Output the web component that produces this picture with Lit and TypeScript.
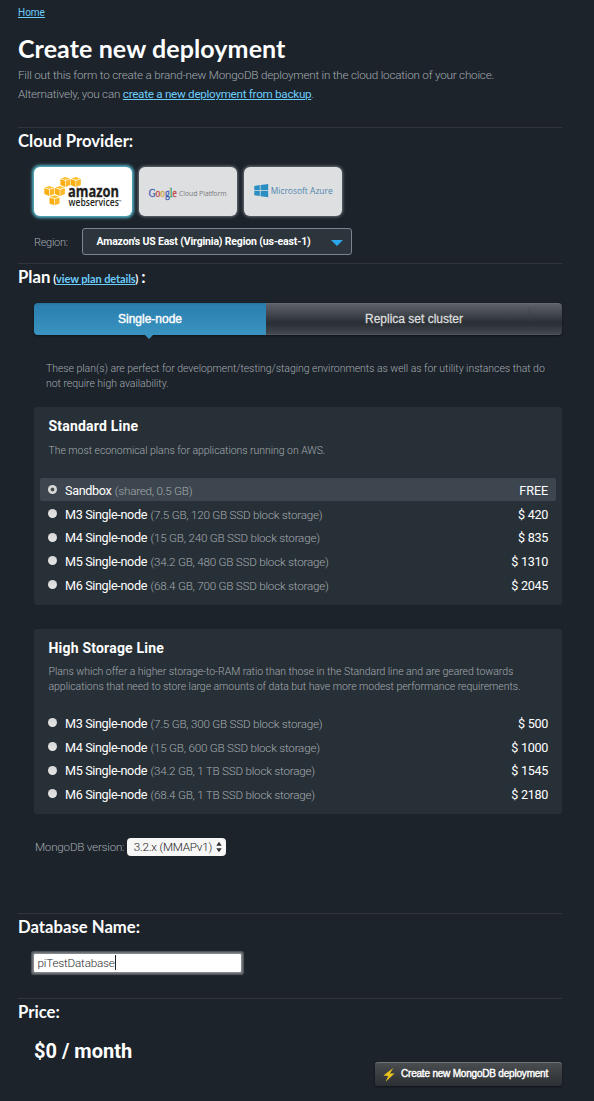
import { LitElement, html, svg, css } from "lit";
import { customElement, property, state } from "lit/decorators.js";
import { classMap } from "lit/directives/class-map.js";

interface Plan {
  id: string;
  name: string;
  specs: string;
  price: string;
}

const STANDARD: Plan[] = [
  { id: "sandbox", name: "Sandbox", specs: "(shared, 0.5 GB)", price: "FREE" },
  { id: "s-m3", name: "M3 Single-node", specs: "(7.5 GB, 120 GB SSD block storage)", price: "$ 420" },
  { id: "s-m4", name: "M4 Single-node", specs: "(15 GB, 240 GB SSD block storage)", price: "$ 835" },
  { id: "s-m5", name: "M5 Single-node", specs: "(34.2 GB, 480 GB SSD block storage)", price: "$ 1310" },
  { id: "s-m6", name: "M6 Single-node", specs: "(68.4 GB, 700 GB SSD block storage)", price: "$ 2045" },
];

const HIGH_STORAGE: Plan[] = [
  { id: "h-m3", name: "M3 Single-node", specs: "(7.5 GB, 300 GB SSD block storage)", price: "$ 500" },
  { id: "h-m4", name: "M4 Single-node", specs: "(15 GB, 600 GB SSD block storage)", price: "$ 1000" },
  { id: "h-m5", name: "M5 Single-node", specs: "(34.2 GB, 1 TB SSD block storage)", price: "$ 1545" },
  { id: "h-m6", name: "M6 Single-node", specs: "(68.4 GB, 1 TB SSD block storage)", price: "$ 2180" },
];

@customElement("plan-line")
export class PlanLine extends LitElement {
  @property() heading = "";
  @property({ attribute: false }) lines: string[] = [];
  @property({ attribute: false }) plans: Plan[] = [];
  @property() selected = "";

  static styles = css`
    :host {
      display: block;
      box-sizing: border-box;
      padding: 10px 6px 8.5px;
      border-radius: 3px;
      background: #283037;
      font-family: Roboto, sans-serif;
    }
    .heading {
      margin: 0;
      padding-left: 8.5px;
      font-size: 14px;
      line-height: 19px;
      font-weight: 700;
      letter-spacing: 0.2px;
      color: #fff;
    }
    .desc {
      padding: 7px 0 20px 8.5px;
      font-size: 10.5px;
      line-height: 15px;
      font-weight: 300;
      letter-spacing: -0.05px;
      color: #a3aaaf;
      white-space: nowrap;
    }
    .desc.double {
      padding: 6px 0 17px 8.5px;
    }
    .row {
      display: flex;
      align-items: baseline;
      height: 23.7px;
      box-sizing: border-box;
      padding: 0 8px;
      border-radius: 2px;
      color: #fff;
      font-size: 12.6px;
      line-height: 25px;
      white-space: pre;
    }
    .row.on {
      height: 23px;
      margin-bottom: 0.7px;
      background: #3d464e;
    }
    .radio {
      display: block;
      align-self: center;
      width: 9px;
      height: 9px;
      margin-right: 8px;
      border-radius: 50%;
      background: linear-gradient(#d6d6d6, #e6e6e6);
    }
    .on .radio {
      background: radial-gradient(circle, #4a4d50 0 1.5px, #d8d8d8 2.3px);
    }
    .name {
      letter-spacing: -0.35px;
    }
    .specs {
      margin-left: 3.5px;
      font-size: 11.7px;
      font-weight: 300;
      letter-spacing: -0.24px;
      color: #a3aaaf;
    }
    .price {
      margin-left: auto;
      letter-spacing: -0.3px;
    }
    .price.free {
      letter-spacing: -0.1px;
    }
  `;

  render() {
    return html`
      <h3 class="heading">${this.heading}</h3>
      <div class=${classMap({ desc: true, double: this.lines.length > 1 })}>
        ${this.lines.map((l) => html`<div>${l}</div>`)}
      </div>
      ${this.plans.map(
        (p) => html`<div class=${classMap({ row: true, on: p.id === this.selected })}>
          <span class="radio"></span><span class="name">${p.name}</span><span class="specs">${p.specs}</span
          ><span class=${classMap({ price: true, free: p.price === "FREE" })}>${p.price}</span>
        </div>`
      )}
    `;
  }
}

const cube = (x: number, y: number) => svg`
  <g transform="translate(${x} ${y})">
    <path d="M5.1 0L9.7 1.5 5.1 3.1 0.5 1.5Z" fill="#fcc22f"/>
    <path d="M0.1 2.1L4.8 3.8V10L0.1 8.1Z" fill="#f9ae12"/>
    <path d="M10.1 2.1L5.4 3.8V10L10.1 8.1Z" fill="#fdb92a"/>
  </g>`;

@customElement("app-root")
export class AppRoot extends LitElement {
  @state() plan = "sandbox";

  static styles = css`
    :host {
      display: block;
      box-sizing: border-box;
      min-height: 1101px;
      padding: 6px 32px 0 18px;
      background: #1c232b;
      font-family: Roboto, sans-serif;
      color: #a3aaaf;
      white-space: nowrap;
    }
    a {
      color: #6ccdfb;
      text-decoration: underline;
      cursor: pointer;
    }
    .crumb {
      height: 26px;
      font-size: 10px;
      line-height: 14px;
    }
    .title {
      margin: 0;
      height: 34px;
      font: 700 25px/32px Lato, sans-serif;
      letter-spacing: 0.1px;
      color: #fff;
    }
    .intro {
      height: 61px;
      font-size: 11.7px;
      line-height: 19px;
      font-weight: 300;
      letter-spacing: -0.22px;
    }
    .intro a {
      font-weight: 400;
      letter-spacing: -0.29px;
    }
    .section {
      box-sizing: border-box;
      border-top: 1px solid #30363b;
    }
    .provider {
      height: 136px;
    }
    .plan {
      height: 650px;
    }
    .database {
      height: 85px;
    }
    .label {
      margin: 0;
      height: 26px;
      font: 700 16.7px/27.5px Lato, sans-serif;
      color: #fff;
    }
    .label .details {
      margin: 0 3px 0 3px;
      font-size: 11px;
      letter-spacing: -0.1px;
    }
    .body {
      padding-left: 16px;
    }
    .logos {
      display: flex;
      gap: 7px;
      padding-top: 13px;
    }
    .logo {
      width: 98px;
      height: 49px;
      border-radius: 6px;
      background: #dedfe1;
      box-shadow: 0 0 3px 1px #6c7177;
    }
    .logo.on {
      background: #fff;
      box-shadow: 0 0 3px 2px #56b4c8;
    }
    .logo svg {
      display: block;
    }
    .region {
      display: flex;
      align-items: center;
      padding-top: 12px;
      font-size: 12px;
      font-weight: 300;
    }
    .region-name {
      width: 48px;
      padding-top: 1px;
      font-size: 11px;
      letter-spacing: -0.3px;
    }
    .select {
      display: flex;
      align-items: center;
      justify-content: space-between;
      box-sizing: border-box;
      width: 270px;
      height: 27px;
      padding: 0 8px 0 13.5px;
      border: 1px solid #7b848c;
      border-radius: 3px;
      background: #2c353c;
      color: #fff;
      font-size: 10.5px;
      font-weight: 700;
      letter-spacing: -0.17px;
    }
    .arrow {
      margin-top: 3px;
      border: 6px solid transparent;
      border-top-color: #2ba6ec;
      border-bottom: 0;
    }
    .tabs {
      display: flex;
      height: 32px;
      margin-top: 13px;
      border-radius: 4px;
      box-shadow: 0 1px 2px #10151a;
      font: 12px/32px "Liberation Sans", sans-serif;
      text-align: center;
    }
    .tab {
      flex: 1;
      border-radius: 0 4px 4px 0;
      background:
        linear-gradient(#474b52, #34383e) 263px 4px / 1px 15px no-repeat,
        linear-gradient(#6a6d76 0, #5a5d66 6%, #41464d 36%, #2b3036 60%, #2c3238 68%, #40464c 95%, #555b62 100%);
      color: #dcdcdc;
      -webkit-text-stroke: 0.3px #dcdcdc;
    }
    .tab.on {
      flex: 0 0 232px;
      position: relative;
      border-radius: 4px 0 0 4px;
      background: linear-gradient(#2b719b 0, #2a80b0 8%, #3a93c1 100%);
      color: #fff;
      -webkit-text-stroke: 0.4px #fff;
    }
    .tab.on::after {
      content: "";
      position: absolute;
      top: 32px;
      left: 111px;
      border: 4px solid transparent;
      border-top-color: #3a93c1;
      border-bottom: 0;
    }
    .note {
      padding: 26px 0 16px 12px;
      font-size: 10.5px;
      line-height: 15px;
      font-weight: 300;
      letter-spacing: -0.045px;
    }
    .lines {
      display: grid;
      gap: 24px;
    }
    .version {
      display: flex;
      align-items: center;
      gap: 2.5px;
      padding: 24px 0 0 1px;
      font-size: 11.7px;
      font-weight: 300;
      letter-spacing: -0.25px;
    }
    .native {
      display: flex;
      align-items: center;
      justify-content: space-between;
      box-sizing: border-box;
      width: 99px;
      height: 18px;
      padding: 0 4px 0 7px;
      border-radius: 4px;
      background: #f7f7f7;
      color: #222;
      line-height: 18px;
    }
    .field {
      display: flex;
      align-items: center;
      box-sizing: border-box;
      width: 207px;
      height: 18px;
      margin: 13.5px 0 0;
      padding-left: 3.5px;
      background: #fff;
      box-shadow: 0 0 0 1px #83868a, 0 0 0 2px #6b7075, 0 0 1px 3px #555b60;
      border-radius: 1px;
      color: #2c2c2c;
      font-size: 11.7px;
      line-height: 18px;
      font-weight: 300;
      letter-spacing: -0.2px;
    }
    .caret {
      width: 1px;
      height: 15px;
      background: #222;
    }
    .amount {
      height: 37px;
      box-sizing: border-box;
      padding-top: 15px;
      font-size: 20px;
      line-height: 22px;
      font-weight: 700;
      color: #fff;
    }
    .actions {
      display: flex;
      justify-content: flex-end;
    }
    .button {
      display: flex;
      align-items: center;
      box-sizing: border-box;
      width: 187px;
      height: 24px;
      padding: 0 0 2px 8px;
      border-top: 1px solid #6f7679;
      border-radius: 3px;
      background: linear-gradient(#4b4e50, #3a3d3f 50%, #2b3034);
      box-shadow: 0 1px 2px #10151a;
      color: #fff;
      font: 10px/20px "Liberation Sans", sans-serif;
      letter-spacing: -0.2px;
      -webkit-text-stroke: 0.4px #fff;
    }
    .button svg {
      margin: 3px 6px 0 0;
    }
  `;

  private aws() {
    return html`<svg width="98" height="49" viewBox="0 0 98 49">
      ${cube(26.3, 10)} ${cube(36.7, 10)} ${cube(10.2, 19)} ${cube(20.8, 19)} ${cube(15.4, 28.3)}
      <text x="34" y="29.8" font-family="Open Sans" font-weight="700" font-size="15.5" fill="#231f20"
        stroke="#231f20" stroke-width="0.3" textLength="51" lengthAdjust="spacingAndGlyphs">amazon</text>
      <text x="34.5" y="39" font-family="Open Sans" font-weight="600" font-size="10" fill="#231f20"
        textLength="53" lengthAdjust="spacingAndGlyphs">webservices<tspan font-size="4" dy="-3.5">™</tspan></text>
    </svg>`;
  }

  private google() {
    return html`<svg width="98" height="49" viewBox="0 0 98 49">
      <text x="9.7" y="30" font-family="Liberation Serif" font-size="11.5" textLength="28"
        lengthAdjust="spacingAndGlyphs" stroke-width="0.3"><tspan fill="#3c60b4" stroke="#3c60b4">G</tspan><tspan fill="#c24a45" stroke="#c24a45">o</tspan><tspan fill="#d1a53a" stroke="#d1a53a">o</tspan><tspan fill="#3c60b4" stroke="#3c60b4">g</tspan><tspan fill="#3f9a5a" stroke="#3f9a5a">l</tspan><tspan fill="#c24a45" stroke="#c24a45">e</tspan></text>
      <text x="40" y="29" font-family="Open Sans" font-size="7" fill="#77797c" textLength="47.5"
        lengthAdjust="spacingAndGlyphs">Cloud Platform</text>
    </svg>`;
  }

  private azure() {
    return html`<svg width="98" height="49" viewBox="0 0 98 49">
      <path fill="#2b8ec2" d="M10.3 18.9L15.8 18.1V23.2H10.3ZM16.6 18L24.2 17V23.2H16.6ZM10.3 24H15.8V29L10.3 28.3ZM16.6 24H24.2V30.2L16.6 29.2Z" />
      <text x="26.7" y="27" font-family="Open Sans" font-size="9" fill="#4f86ae" textLength="62"
        lengthAdjust="spacingAndGlyphs">Microsoft Azure</text>
    </svg>`;
  }

  render() {
    return html`
      <div class="crumb"><a>Home</a></div>
      <h1 class="title">Create new deployment</h1>
      <div class="intro">
        <div>Fill out this form to create a brand-new MongoDB deployment in the cloud location of your choice.</div>
        <div>Alternatively, you can <a>create a new deployment from backup</a>.</div>
      </div>

      <section class="section provider">
        <h2 class="label">Cloud Provider:</h2>
        <div class="body">
          <div class="logos">
            <div class="logo on">${this.aws()}</div>
            <div class="logo">${this.google()}</div>
            <div class="logo">${this.azure()}</div>
          </div>
          <div class="region">
            <span class="region-name">Region:</span>
            <div class="select">
              <span>Amazon's US East (Virginia) Region (us-east-1)</span>
              <span class="arrow"></span>
            </div>
          </div>
        </div>
      </section>

      <section class="section plan">
        <h2 class="label">Plan<span class="details">(<a>view plan details</a>)</span>:</h2>
        <div class="body">
          <div class="tabs">
            <div class="tab on">Single-node</div>
            <div class="tab">Replica set cluster</div>
          </div>
          <div class="note">
            <div>These plan(s) are perfect for development/testing/staging environments as well as for utility instances that do</div>
            <div>not require high availability.</div>
          </div>
          <div class="lines">
            <plan-line
              heading="Standard Line"
              .lines=${["The most economical plans for applications running on AWS."]}
              .plans=${STANDARD}
              .selected=${this.plan}
            ></plan-line>
            <plan-line
              heading="High Storage Line"
              .lines=${[
                "Plans which offer a higher storage-to-RAM ratio than those in the Standard line and are geared towards",
                "applications that need to store large amounts of data but have more modest performance requirements.",
              ]}
              .plans=${HIGH_STORAGE}
              .selected=${this.plan}
            ></plan-line>
          </div>
          <div class="version">
            <span>MongoDB version:</span>
            <div class="native">
              <span>3.2.x (MMAPv1)</span>
              <svg width="6" height="12" viewBox="0 0 6 12">
                <path fill="#333" d="M3 0.8L5.7 4.8H0.3ZM3 11.2L5.7 7.2H0.3Z" />
              </svg>
            </div>
          </div>
        </div>
      </section>

      <section class="section database">
        <h2 class="label">Database Name:</h2>
        <div class="body">
          <div class="field"><span>piTestDatabase</span><span class="caret"></span></div>
        </div>
      </section>

      <section class="section">
        <h2 class="label">Price:</h2>
        <div class="body">
          <div class="amount">$0 / month</div>
          <div class="actions">
            <div class="button">
              <svg width="12" height="14" viewBox="0 0 12 14">
                <path fill="#e9c21d" d="M10.2 0L0.4 7.6 5.2 7.9 2.6 13.8 11.6 5.6 7 5.4Z" />
              </svg>
              <span>Create new MongoDB deployment</span>
            </div>
          </div>
        </div>
      </section>
    `;
  }
}
